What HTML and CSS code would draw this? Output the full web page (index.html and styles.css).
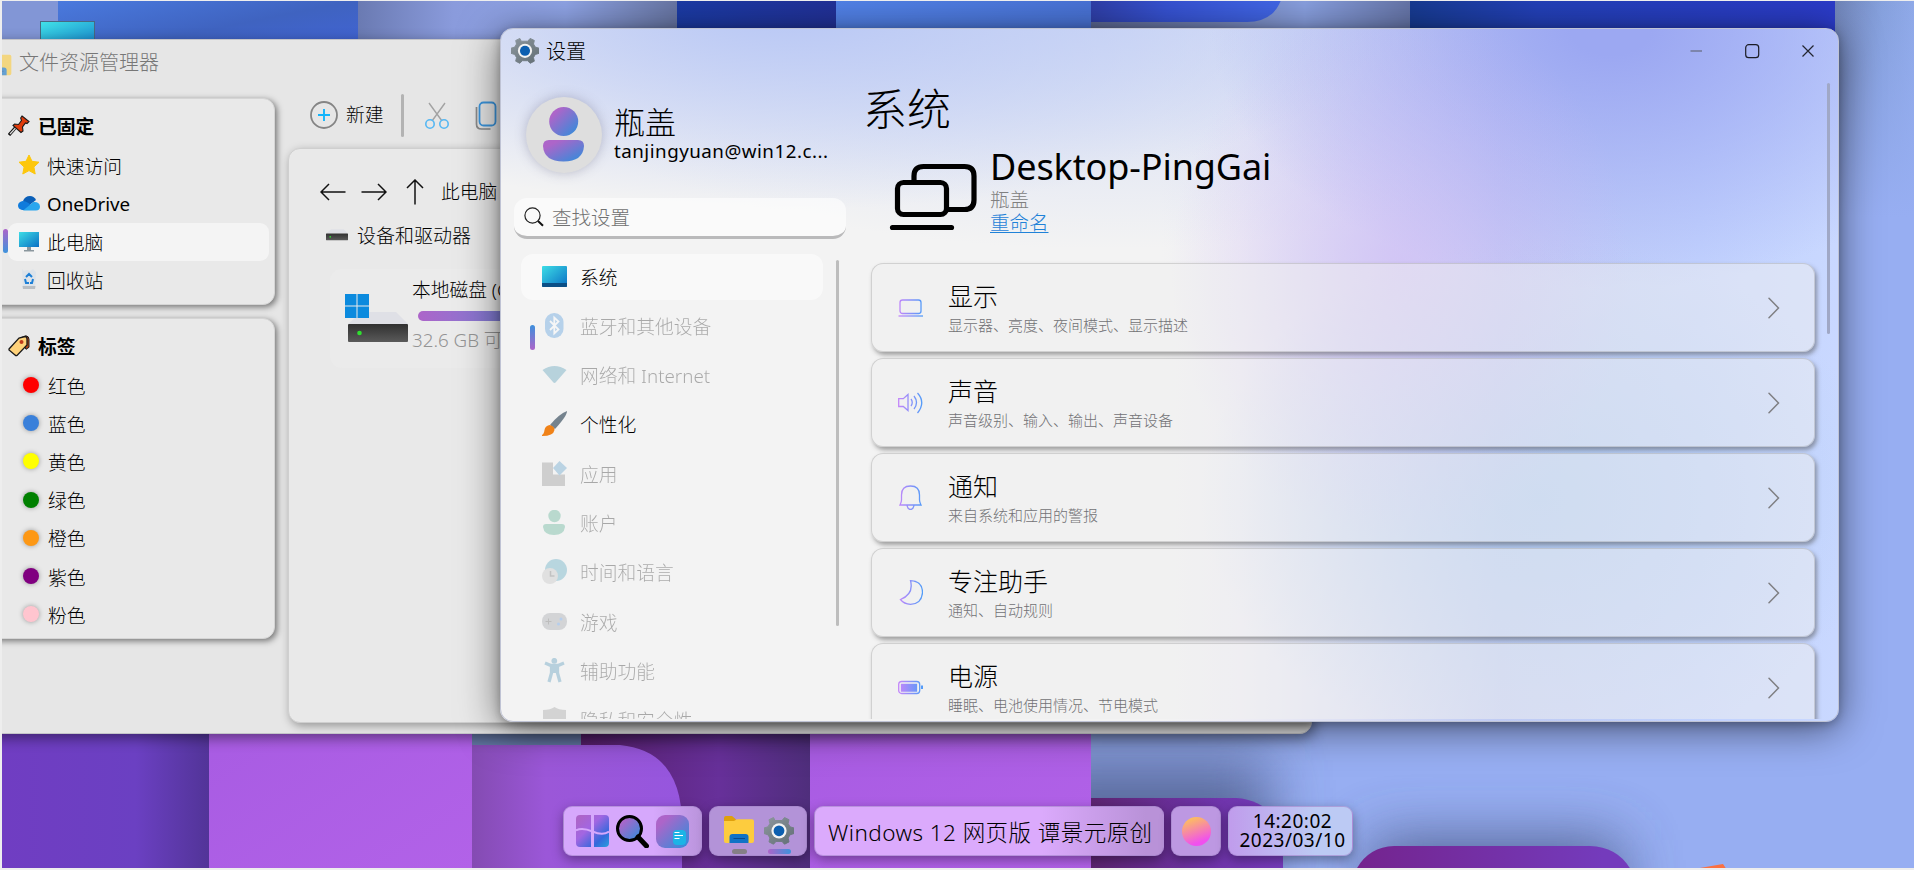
FILE: index.html
```
<!DOCTYPE html>
<html lang="zh-CN">
<head>
<meta charset="utf-8">
<title>Windows 12 网页版</title>
<link rel="stylesheet" href="styles.css">
</head>
<body>
<svg width="0" height="0" class="defs" aria-hidden="true">
  <defs>
    <linearGradient id="accent" x1="0" y1="0" x2="1" y2="1"><stop offset=".2" stop-color="#ad65c9"/><stop offset="1" stop-color="#2a8fdc"/></linearGradient>
    <linearGradient id="line" gradientUnits="userSpaceOnUse" x1="0" y1="0" x2="25" y2="0"><stop offset="0" stop-color="#c686fa"/><stop offset="1" stop-color="#4f9cf8"/></linearGradient>
    <linearGradient id="screen" x1="0" y1="0" x2="1" y2="1"><stop offset="0" stop-color="#3ddde6"/><stop offset="1" stop-color="#0a6fc4"/></linearGradient>
    <linearGradient id="gearg" x1="0" y1="0" x2="1" y2="1"><stop offset="0" stop-color="#8d979e"/><stop offset="1" stop-color="#626e75"/></linearGradient>
    <linearGradient id="diskg" x1="0" y1="0" x2="0" y2="1"><stop offset="0" stop-color="#303030"/><stop offset="1" stop-color="#5a5a5a"/></linearGradient>
    <linearGradient id="tile" x1="0" y1="0" x2="1" y2="1"><stop offset=".1" stop-color="#ad65c9"/><stop offset=".4" stop-color="#a266e2"/><stop offset=".75" stop-color="#3568dc"/><stop offset="1" stop-color="#2a9fdc"/></linearGradient>
    <symbol id="gear" viewBox="0 0 30 30">
      <path d="M11 4.500 9.500 1.500 5 3.700 5.900 7.500 4 10.800 0 12v5.500l4 1.300 1.900 3.200L5 25.900l4.500 2.300L12 25.400h6l2.500 2.800 4.500-2.300-.9-3.900 1.900-3.200 4-1.300V12l-4-1.200-1.900-3.300.9-3.800-4.500-2.200L18 4.500Z" fill="url(#gearg)" stroke="url(#gearg)" stroke-linejoin="round"/>
      <circle cx="15" cy="14.800" r="7.600" fill="#f3f3f3"/><circle cx="15" cy="14.800" r="5.400" fill="#0c5fb0"/>
    </symbol>
    <symbol id="folder" viewBox="0 0 30 28">
      <path d="M0 2q0-2 2-2h6l3 2.500q1.500 1 1.500 4V8H0Z" fill="#dfa00c"/>
      <path d="M0 5h10l3-1.700h15q2 0 2 2V25q0 2-2 2H2q-2 0-2-2Z" fill="#fdcc3e"/>
      <path d="M5.500 27v-6q0-3 3-3h13q3 0 3 3v6Z" fill="#1072c6"/><path d="M9.500 22.500h11.500" stroke="#0a4a8c" stroke-width="1"/>
    </symbol>
    <symbol id="disk" viewBox="0 0 60 32">
      <path d="M14 0h34l12 12H0Z" fill="#dfe0e6"/><rect y="12" width="60" height="18" rx="1" fill="url(#diskg)"/><circle cx="11.500" cy="21" r="2.300" fill="#2fe02f"/>
    </symbol>
    <symbol id="chev" viewBox="0 0 12 22"><path d="M1 1.200 10.500 11 1 20.800" fill="none" stroke="#7f7f83" stroke-width="1.500" stroke-linecap="round"/></symbol>
  </defs>
</svg>

<div class="desktop">
  <svg class="wallpaper" viewBox="0 0 1914 870" preserveAspectRatio="none" aria-hidden="true">
    <defs>
      <linearGradient id="w1" x1="0" y1="0" x2="1" y2="1"><stop offset="0" stop-color="#4a7ade"/><stop offset=".5" stop-color="#3f63c0"/><stop offset="1" stop-color="#4264da"/></linearGradient>
      <linearGradient id="w2"><stop offset="0" stop-color="#6a7ab2"/><stop offset=".3" stop-color="#8a9bdc"/><stop offset=".65" stop-color="#8fa4e6"/><stop offset="1" stop-color="#6876a4"/></linearGradient>
      <linearGradient id="w3"><stop offset="0" stop-color="#1b3ba6"/><stop offset="1" stop-color="#223198"/></linearGradient>
      <linearGradient id="w4" x1="0" y1="0" x2="1" y2=".1"><stop offset="0" stop-color="#5282e8"/><stop offset="1" stop-color="#4973d6"/></linearGradient>
      <linearGradient id="w5"><stop offset="0" stop-color="#2f3fa8"/><stop offset=".4" stop-color="#3652d2"/><stop offset="1" stop-color="#4166e6"/></linearGradient>
      <linearGradient id="w6"><stop offset="0" stop-color="#5d6993"/><stop offset=".4" stop-color="#7585b8"/><stop offset=".67" stop-color="#89a0e0"/><stop offset="1" stop-color="#6675a8"/></linearGradient>
      <linearGradient id="w7"><stop offset="0" stop-color="#173b92"/><stop offset=".3" stop-color="#2340b8"/><stop offset="1" stop-color="#2b3bc8"/></linearGradient>
      <linearGradient id="w8"><stop offset="0" stop-color="#6f83b6"/><stop offset=".6" stop-color="#85a0dc"/><stop offset="1" stop-color="#8fa9e8"/></linearGradient>
      <linearGradient id="w8y" x1="0" y1="0" x2="0" y2="1"><stop offset="0" stop-color="#97aef2" stop-opacity="0"/><stop offset=".25" stop-color="#97aef2"/></linearGradient>
      <linearGradient id="b1"><stop offset="0" stop-color="#703dc2"/><stop offset=".65" stop-color="#6b40c2"/><stop offset="1" stop-color="#523498"/></linearGradient>
      <linearGradient id="b2" x1="0" y1="0" x2="1" y2="1"><stop offset="0" stop-color="#a75be2"/><stop offset="1" stop-color="#b262e8"/></linearGradient>
      <linearGradient id="b3"><stop offset="0" stop-color="#844bb2"/><stop offset=".35" stop-color="#9b57d8"/><stop offset="1" stop-color="#9656de"/></linearGradient>
      <linearGradient id="b4"><stop offset="0" stop-color="#591f6e"/><stop offset=".6" stop-color="#67309a"/><stop offset="1" stop-color="#4f2e7c"/></linearGradient>
      <linearGradient id="b5"><stop offset="0" stop-color="#5c2470"/><stop offset=".6" stop-color="#6e33a8"/><stop offset="1" stop-color="#763cbc"/></linearGradient>
      <linearGradient id="b6"><stop offset="0" stop-color="#74248e"/><stop offset=".9" stop-color="#743bbc"/></linearGradient>
      <filter id="soft" x="-50%" y="-100%" width="200%" height="300%"><feGaussianBlur stdDeviation="30"/></filter>
    </defs>
    <rect width="1914" height="870" fill="#97aef2"/>
    <rect width="58" height="60" fill="#8296d6"/>
    <rect x="58" width="300" height="60" fill="url(#w1)"/>
    <rect x="358" width="319" height="60" fill="url(#w2)"/>
    <rect x="677" width="159" height="60" fill="url(#w3)"/>
    <rect x="836" width="255" height="60" fill="url(#w4)"/>
    <rect x="1091" width="319" height="60" fill="url(#w6)"/>
    <path d="M1091 0h190q-8 22-34 22H1091Z" fill="url(#w5)"/>
    <rect x="1410" width="425" height="60" fill="url(#w7)"/>
    <rect x="1835" width="79" height="870" fill="url(#w8)"/>
    <rect x="1835" width="79" height="870" fill="url(#w8y)"/>
    <rect x="1030" y="760" width="240" height="140" fill="#3f4d78" opacity=".7" filter="url(#soft)"/>
    <rect x="1370" y="840" width="250" height="90" fill="#3f4d78" opacity=".8" filter="url(#soft)"/>
    <rect y="700" width="209" height="170" fill="url(#b1)"/>
    <rect x="472" y="700" width="109" height="60" fill="#6377a4"/>
    <rect x="581" y="700" width="229" height="170" fill="url(#b4)"/>
    <path d="M472 745h148q62 6 62 80v45H472Z" fill="url(#b3)"/>
    <rect x="209" y="700" width="263" height="170" fill="url(#b2)"/>
    <rect x="810" y="700" width="281" height="170" fill="url(#b2)"/>
    <path d="M1091 798h145q47 3 47 60v12H1091Z" fill="url(#b5)"/>
    <path d="M1356 870q12-23 38-24h196q28 1 41 24Z" fill="url(#b6)"/>
    <path d="m1694 869 29-5 4 6Z" fill="#fb7040"/>
  </svg>
  <div class="shortcut"></div>

  <section class="window explorer">
    <header class="ex-title"><svg width="27" height="24"><use href="#folder"/></svg><span>文件资源管理器</span></header>
    <div class="ex-body">
      <aside class="ex-side">
        <div class="panel pinned">
          <h3><svg width="22" height="21" viewBox="0 0 22 21"><path d="m1 20 7-8" stroke="#111" stroke-width="3.200"/><path d="m2 19 6-6.500" stroke="#ddd" stroke-width="1.200"/><path d="m14 1 7 5.500-2 2-1.500-.5-3 4 .5 4-2 1.500-8-7L6.500 9l4 .5 3-4-.8-2.500Z" fill="#e03c0c" stroke="#1a1a1a" stroke-width="1.100"/></svg>已固定</h3>
          <ul>
            <li><svg viewBox="0 0 22 22"><path d="m11 1 3 6.300 7 .9-5.100 4.800 1.300 7-6.200-3.400L4.800 20l1.300-7L1 8.200l7-.9Z" fill="#fdc70c" stroke="#fdc70c" stroke-linejoin="round"/></svg>快速访问</li>
            <li class="latin"><svg viewBox="0 0 22 22"><path d="M5 9q2-5 7-5 4 0 6 4l-9 7Z" fill="#0a5fb8"/><path d="M4 18q-4-1-4-4.500T4.500 9q3 0 6 2l5 4-8 3Z" fill="#0f7bdc"/><path d="M5 18.500 15.500 10q6-.5 6.500 4.500 0 4-4 4Z" fill="#29a6ee"/></svg>OneDrive</li>
            <li class="active"><svg viewBox="0 0 22 22"><path d="M9 17h4v3h3v1.500H6V20h3Z" fill="#8b979e"/><rect x="1" y="2" width="20" height="15" fill="url(#screen)"/></svg>此电脑</li>
            <li><svg viewBox="0 0 22 22"><path d="m4 1 2 2 3-1 3 1 3-2 3 3-1 17H5Z" fill="#dde3e9"/><path d="m4.500 18 .5 3h12l.5-3Z" fill="#b9bec3"/><path d="m8 9 3-3 3 3M7 11l1 4h3M15 11l-1 4h-2" fill="none" stroke="#1d7fd6" stroke-width="2"/></svg>回收站</li>
          </ul>
        </div>
        <div class="panel tags">
          <h3><svg width="22" height="22" viewBox="0 0 22 22"><path d="M12 3 18 .8q3 .5 3 3.500v8l-3 2Z" fill="#b8441a" stroke="#1a1a1a"/><path d="M1 14 11 3l6-1.500q2 0 2 2.500v6L9 20.500Q8 21 7 20l-6-5Z" fill="#ffd27a" stroke="#1a1a1a" stroke-width="1.300"/><circle cx="13.500" cy="7" r="2" fill="#c0391b"/></svg>标签</h3>
          <ul>
            <li><i class="dot red"></i>红色</li>
            <li><i class="dot blue"></i>蓝色</li>
            <li><i class="dot yellow"></i>黄色</li>
            <li><i class="dot green"></i>绿色</li>
            <li><i class="dot orange"></i>橙色</li>
            <li><i class="dot purple"></i>紫色</li>
            <li><i class="dot pink"></i>粉色</li>
          </ul>
        </div>
      </aside>
      <main class="ex-main">
        <div class="tools">
          <svg width="28" height="28" viewBox="0 0 28 28" fill="none"><circle cx="14" cy="14" r="13" stroke="#858585" stroke-width="1.800"/><path d="M14 8v12M8 14h12" stroke="#12b4fb" stroke-width="1.900"/></svg>
          <span>新建</span><b class="rule"></b>
          <svg width="24" height="28" viewBox="0 0 24 28" fill="none"><path d="M4 2 17 20M20 2 7 20" stroke="#a3a3a3" stroke-width="1.400"/><circle cx="5" cy="23" r="4.200" stroke="#55b7f3" stroke-width="1.600"/><circle cx="19" cy="23" r="4.200" stroke="#55b7f3" stroke-width="1.600"/></svg>
          <svg class="copy" width="22" height="29" viewBox="0 0 22 29" fill="none"><path d="M1.500 6v17q0 5 5 5h9" stroke="#8a8a8a" stroke-width="1.700"/><rect x="4.500" y="1.500" width="16" height="23" rx="4" stroke="#3d96dd" stroke-width="1.800"/></svg>
        </div>
        <div class="pane">
          <div class="path">
            <svg width="26" height="26" viewBox="0 0 26 26"><path d="M25.500 13H1M9 5 1 13l8 8"/></svg>
            <svg width="26" height="26" viewBox="0 0 26 26"><path d="M.5 13H25M17 5l8 8-8 8"/></svg>
            <svg width="18" height="26" viewBox="0 0 18 26"><path d="M9 25.500V1M1 9l8-8 8 8"/></svg>
            <span>此电脑</span>
          </div>
          <div class="group"><svg width="22" height="12"><use href="#disk"/></svg>设备和驱动器</div>
          <div class="drive">
            <svg width="64" height="50" viewBox="0 0 64 50"><use href="#disk" x="3" y="18" width="60" height="32"/><path d="M0 0h11.500v11.500H0ZM12.500 0H24v11.500H12.500ZM0 12.500h11.500V24H0ZM12.500 12.500H24V24H12.500Z" fill="#0b8ade"/></svg>
            <div class="drive-info"><span>本地磁盘 (C:)</span><div class="bar"></div><small>32.6 GB 可用, 共 143 GB</small></div>
          </div>
        </div>
      </main>
    </div>
  </section>

  <section class="window settings">
    <header class="st-title">
      <svg width="28" height="28"><use href="#gear"/></svg><span>设置</span>
      <svg class="winbtns" width="122" height="16" viewBox="0 0 122 16" fill="none"><path d="M.5 8h11.500" stroke="#7d85ad" stroke-width="1.800"/><rect x="55.700" y="1.700" width="13" height="13" rx="3" stroke="#1b1c24" stroke-width="1.200"/><path d="m112.500 2.500 11 11m0-11-11 11" stroke="#23252f" stroke-width="1.200"/></svg>
    </header>
    <div class="st-body">
      <aside class="st-side">
        <div class="user">
          <div class="avatar"><svg width="42" height="56" viewBox="0 0 42 56"><circle cx="20.700" cy="14.500" r="14.500" fill="url(#accent)"/><path d="M0 39q0-6 6-6h29q6 0 6 6-1 15.500-20.500 15.500T0 39Z" fill="url(#accent)"/></svg></div>
          <div><div class="uname">瓶盖</div><div class="mail">tanjingyuan@win12.c...</div></div>
        </div>
        <div class="search"><svg width="20" height="20" viewBox="0 0 20 20" fill="none"><circle cx="8.500" cy="8.500" r="7.600" stroke="#222" stroke-width="1.200"/><path d="m14 14 5 4.800" stroke="#111" stroke-width="2"/></svg>查找设置</div>
        <nav>
          <b class="marker"></b><b class="thumb"></b>
          <a class="on"><svg viewBox="0 0 25 25"><rect y="2" width="25" height="21" rx="1" fill="url(#screen)"/><path d="M0 19h25v3q0 1-1 1H1q-1 0-1-1Z" fill="#0b4f86"/></svg>系统</a>
          <a class="off"><svg viewBox="0 0 25 25"><rect x="3" width="18.500" height="25" rx="9" fill="#2d84d6"/><path d="m8 8 8.500 8.500-4.200 4V4.500l4.200 4L8 17" fill="none" stroke="#fff" stroke-width="1.800"/></svg>蓝牙和其他设备</a>
          <a class="off"><svg viewBox="0 0 25 25"><path d="M.5 8q12-8 24 0L14 20q-1.500 2-3 0Z" fill="#3187a8"/></svg>网络和 Internet</a>
          <a><svg viewBox="0 0 25 25"><path d="M8 14Q17 3 25 0q0 5-12 18Z" fill="#75838e"/><path d="M0 24q2-1 2.500-5t5-5q5 1 5 5-1 6-12.500 6Z" fill="#f08218"/></svg>个性化</a>
          <a class="off"><svg viewBox="0 0 25 25"><path d="M0 1.500h11v12h12V25H0Z" fill="#7b7b7b"/><path d="m17.500 0 7.500 7-7.500 7.500L11 7Z" fill="#388ac0"/></svg>应用</a>
          <a class="off"><svg viewBox="0 0 25 25"><circle cx="12.500" cy="6" r="6.200" fill="#35a07c"/><path d="M1 17q0-3 3-3h16q3 0 3 3-1 8-11 8T1 17Z" fill="#35a07c"/></svg>账户</a>
          <a class="off"><svg viewBox="0 0 25 25"><circle cx="14" cy="11" r="11" fill="#3494b4"/><circle cx="8" cy="17" r="8" fill="#b5b5b5"/><path d="M8.500 12v5h4" stroke="#555" fill="none" stroke-width="1.500"/></svg>时间和语言</a>
          <a class="off"><svg viewBox="0 0 25 25"><rect y="4" width="25" height="17" rx="8" fill="#8b8f96"/><path d="M3.500 12.500h6M6.500 9.500v6" stroke="#444"/><circle cx="19" cy="10" r="1.500" fill="#2d7be0"/><circle cx="16.500" cy="15" r="1.500" fill="#2d7be0"/></svg>游戏</a>
          <a class="off"><svg viewBox="0 0 25 25"><circle cx="12.300" cy="2.800" r="2.900" fill="#3183ae"/><path d="m3 5 6 2.500h7l6-2.500M12.500 8v7M9.500 8v7L7 24M15.500 8v7l2.500 9" fill="none" stroke="#3183ae" stroke-width="3.300"/></svg>辅助功能</a>
          <a class="off"><svg viewBox="0 0 25 25"><path d="M12.500 0q4 3 11.500 3v11q-2 8-11.500 11Q3 22 1 14V3q7.500 0 11.500-3Z" fill="#8a8a8a"/></svg>隐私和安全性</a>
        </nav>
      </aside>
      <main class="st-main">
        <h1>系统</h1>
        <div class="device">
          <svg width="90" height="68" viewBox="0 0 90 68" fill="none" stroke="#000" stroke-width="5.200" stroke-linecap="round"><path d="M25 17V13q0-9.500 9.500-9.500h41Q85 3.500 85 13v24q0 9.500-9.500 9.500H60"/><rect x="8.500" y="19.500" width="49" height="32" rx="6"/><path d="M3.500 64.500h59"/></svg>
          <div class="dev-info"><div class="host">Desktop-PingGai</div><div class="owner">瓶盖</div><a class="rename">重命名</a></div>
        </div>
        <div class="cards">
          <div class="card"><svg class="ico" viewBox="0 0 25 25"><rect x="2" y="5" width="21" height="13.500" rx="2.500"/><path d="M.5 21h24.500"/></svg><div class="ct"><h2>显示</h2><p>显示器、亮度、夜间模式、显示描述</p></div><svg class="chev"><use href="#chev"/></svg></div>
          <div class="card"><svg class="ico" viewBox="0 0 25 25"><path d="M.7 8.700h4.600L10 4.500v16L5.300 16.500H.7ZM13 9q2.500 3.500 0 7M16 6q5 6.500 0 13M19.500 3q8.500 9.500 0 20"/></svg><div class="ct"><h2>声音</h2><p>声音级别、输入、输出、声音设备</p></div><svg class="chev"><use href="#chev"/></svg></div>
          <div class="card"><svg class="ico" viewBox="0 0 25 25"><path d="M2 20q1.500-3 1.500-5V10q0-9 9-9t9 9v5q0 2 1.500 5ZM9 20.500q1 4 3.500 4t3.500-4"/></svg><div class="ct"><h2>通知</h2><p>来自系统和应用的警报</p></div><svg class="chev"><use href="#chev"/></svg></div>
          <div class="card"><svg class="ico" viewBox="0 0 25 25"><path d="M12.500.7q12 .5 12 12-1 11.300-12 11.600Q6 24 2.500 19.500 16 14 12.500.7Z"/></svg><div class="ct"><h2>专注助手</h2><p>通知、自动规则</p></div><svg class="chev"><use href="#chev"/></svg></div>
          <div class="card"><svg class="ico" viewBox="0 0 25 25"><rect x=".7" y="6.500" width="21" height="12" rx="3"/><path d="M3.500 9.500h15v6.500h-15Z" fill="url(#line)"/><path d="M24 10.500v3.500" stroke-width="2"/></svg><div class="ct"><h2>电源</h2><p>睡眠、电池使用情况、节电模式</p></div><svg class="chev"><use href="#chev"/></svg></div>
        </div>
      </main>
      <b class="vthumb"></b>
    </div>
  </section>

  <footer class="taskbar">
    <div class="dock start">
      <svg width="33" height="33" viewBox="0 0 33 33"><rect width="33" height="32" rx="4" fill="url(#tile)"/><path d="M15 0h3v33h-3Z" fill="#d6a8fc"/><path d="M0 15.500q6-3.500 16.500 1T33 16.500" fill="none" stroke="#d6a8fc" stroke-width="2"/></svg>
      <svg width="33" height="33" viewBox="0 0 33 33"><circle cx="13.500" cy="13.500" r="12" fill="url(#accent)" stroke="#000" stroke-width="3"/><path d="m22 22 8.500 9" stroke="#000" stroke-width="5" stroke-linecap="round"/></svg>
      <svg width="33" height="33" viewBox="0 0 33 33"><rect width="33" height="33" rx="9" fill="url(#accent)"/><rect x="17" y="15" width="13" height="15" rx="4" fill="#1cb4e6"/><path d="M18.500 17.500h5M18.500 20.500h8.500M18.500 23.500h5" stroke="#fff" stroke-width="1.200"/></svg>
    </div>
    <div class="dock apps">
      <div class="app"><svg width="30" height="28"><use href="#folder"/></svg><i></i></div>
      <div class="app current"><svg width="30" height="30"><use href="#gear"/></svg><i></i></div>
    </div>
    <div class="dock label"><span>Windows 12 网页版 谭景元原创</span></div>
    <div class="dock orbbox"><b class="orb"></b></div>
    <div class="dock clock"><span>14:20:02</span><span>2023/03/10</span></div>
  </footer>
</div>
</body>
</html>
```
FILE: styles.css
```
* { box-sizing: border-box; }
body { margin: 0; overflow: hidden; background: #eeeeee; color: #000;
  font-family: "Noto Sans", "Noto Sans CJK SC", sans-serif; font-weight: 300; font-size: 18.75px; white-space: nowrap; }
h1, h2, h3, p, ul { margin: 0; padding: 0; list-style: none; font-weight: 300; }
svg { flex: none; display: block; }
.defs { position: absolute; }
.desktop { position: relative; margin: 1px 0 0 2px; width: 1912px; height: 867px; overflow: hidden; }
.wallpaper { position: absolute; left: -2px; top: -1px; width: 1914px; height: 870px; }
.shortcut { position: absolute; left: 38px; top: 20px; width: 55px; height: 40px; border: 1.5px solid #496981; background: linear-gradient(160deg, #40e2e8, #0e70c6 90%); }

.window { position: absolute; border: 1px solid #c4c4c8; overflow: hidden; }

/* file explorer */
.explorer { left: -21px; top: 38px; width: 1331px; height: 695px; border-radius: 12px; background: #e6e6e6; box-shadow: 2px 4px 14px rgba(0,0,0,.45); }
.ex-title { display: flex; align-items: center; gap: 7px; height: 46px; padding: 0 0 3px 3px; font-size: 20px; color: #777; }
.ex-title svg { opacity: .6; position: relative; top: 2px; }
.ex-body { display: flex; height: 647px; }
.ex-side { width: 293px; padding-top: 12px; }
.panel { margin-bottom: 13px; border: 1px solid #d5d5d5; border-radius: 12px; background: #e9e9e9; box-shadow: 2px 2px 6px rgba(0,0,0,.5); padding-left: 25px; }
.pinned { height: 207px; }
.tags { height: 321px; }
.panel h3 { display: flex; align-items: center; gap: 8px; height: 48px; padding-top: 5px; font-size: 18.750px; font-weight: 700; }
.panel li { display: flex; align-items: center; height: 38px; padding-bottom: 2px; }
.pinned li { gap: 7px; padding-left: 10px; margin: 0 5px 0 0; }
.pinned li svg { width: 22px; height: 22px; }
.pinned .latin { font-weight: 400; }
.pinned .active { position: relative; background: #f4f4f4; border-radius: 9px; }
.active::before { content: ""; position: absolute; left: -5px; top: 6px; width: 5px; height: 24px; border-radius: 3px; background: linear-gradient(#ad65c9, #3d93dc); }
.tags li { gap: 9px; padding-left: 15px; height: 38.200px; }
.dot { width: 16px; height: 16px; border-radius: 50%; box-shadow: 0 0 5px rgba(0,0,0,.35); }
.red { background: #f00; } .blue { background: #3a80da; } .yellow { background: #ff0; } .green { background: #008000; }
.orange { background: #fd9815; } .purple { background: #800080; } .pink { background: #ffc5cf; }
.ex-main { flex: 1; padding-left: 13px; }
.tools { display: flex; align-items: center; height: 62px; padding: 0 0 4px 22px; }
.tools span { margin: 0 17px 3px 8px; }
.rule { width: 3px; height: 43px; border-radius: 2px; background: #b3b3b3; margin-right: 21px; }
.copy { margin-left: 26px; }
.pane { height: 575px; border: 1px solid #cfcfcf; border-radius: 12px 0 0 12px; background: #e9e9e9; box-shadow: 2px 3px 10px rgba(0,0,0,.35); padding-left: 31px; }
.path { display: flex; align-items: center; height: 86px; }
.path svg { fill: none; stroke: #111; stroke-width: 1.500; margin-right: 15px; }
.path svg + svg + svg { margin: 0 17px 0 4px; }
.path span { margin-bottom: 3px; }
.group { display: flex; align-items: center; gap: 9px; margin: -12px 0 0 6px; height: 24px; font-size: 19px; }
.drive { display: flex; margin: 22px 0 0 10px; width: 320px; height: 99px; padding: 25px 0 0 15px; border-radius: 12px; background: #ebebeb; }
.drive-info { margin: -20px 0 0 3px; display: flex; flex-direction: column; }
.drive-info span { line-height: 31px; }
.bar { width: 190px; height: 10px; margin: 6px 0 5px 6px; border-radius: 5px; background: linear-gradient(90deg, #ad65c9, #6d86d8 60%, #3d93dc); }
.drive-info small { font-size: 18.75px; line-height: 28px; color: #949494; }

/* settings */
.settings { left: 498px; top: 27px; width: 1339px; height: 694px; border-radius: 13px; border-color: #bfc3d4;
  box-shadow: 0 6px 40px rgba(0,0,0,.55), 0 2px 10px rgba(0,0,0,.25);
  background:
    radial-gradient(ellipse 230px 270px at 900px 240px, rgba(208,184,246,.6), rgba(208,184,246,0)),
    radial-gradient(ellipse 400px 260px at 1110px 0, #9ca8f2 10%, rgba(156,168,242,0)),
    radial-gradient(ellipse 340px 260px at 1040px 470px, rgba(168,200,240,.75), rgba(168,200,240,0)),
    radial-gradient(ellipse 600px 200px at 290px -20px, #bccaf5 10%, rgba(200,212,246,0)),
    radial-gradient(ellipse 620px 240px at 600px -20px, rgba(200,212,246,.8), rgba(214,220,240,0)),
    linear-gradient(90deg, #f3f3f3 660px, #eeedf4 740px, #c3ccf4 1000px, #c2d2fe 1200px, #c9d8ff); }
.st-title { display: flex; align-items: center; height: 45px; padding: 0 26px 2px 10px; font-size: 20px; }
.st-title span { margin-left: 7px; }
.winbtns { margin-left: auto; overflow: visible; }
.st-body { position: relative; display: flex; height: 645px; overflow: hidden; }
.st-side { width: 364px; padding-left: 13px; }
.user { display: flex; align-items: center; gap: 12px; height: 122px; padding: 0 0 0 12px; }
.avatar { display: flex; align-items: center; justify-content: center; width: 76px; height: 76px; border-radius: 50%; background: #dedede; box-shadow: 0 0 12px rgba(90,90,120,.35); }
.uname { font-size: 31px; line-height: 34px; margin-top: -3px; }
.mail { font-size: 18.750px; line-height: 24px; font-weight: 400; letter-spacing: .5px; }
.search { display: flex; align-items: center; gap: 8px; width: 332px; height: 41px; margin-top: 2px; padding: 0 0 1px 10px; border-radius: 13px; border-bottom: 3px solid #bababb; background: rgba(255,255,255,.6); font-size: 19.500px; color: #717171; }
nav { position: relative; display: flex; flex-direction: column; gap: 3.330px; padding: 15px 0 0 7px; }
nav a { display: flex; align-items: center; gap: 13px; width: 302px; height: 46px; flex: none; padding: 0 0 2px 21px; border-radius: 12px; }
nav a svg { width: 25px; height: 25px; }
nav .on { background: rgba(255,255,255,.5); }
nav .off { opacity: .3; }
.marker { position: absolute; left: 16px; top: 86px; width: 5px; height: 25px; border-radius: 3px; background: linear-gradient(#3d8fdc, #ad65c9); }
.thumb { position: absolute; left: 322px; top: 21px; width: 3px; height: 366px; border-radius: 2px; background: #bdbdbd; }
.st-main { width: 960px; }
.st-main h1 { font-size: 44px; line-height: 60px; height: 66px; padding: 5px 0 0; margin-left: -2px; }
.device { display: flex; align-items: flex-start; gap: 11px; height: 123px; padding: 23px 0 0 24px; }
.dev-info { margin-top: -20px; }
.host { font-size: 36px; line-height: 47px; font-weight: 400; letter-spacing: -.1px; }
.owner { font-size: 19.500px; line-height: 23px; color: #808080; margin-top: -2px; }
.rename { display: block; font-size: 19.500px; line-height: 23px; color: #1f82d8; text-decoration: underline; text-underline-offset: 2px; text-decoration-thickness: 1px; }
.cards { display: flex; flex-direction: column; gap: 6px; padding: 0 0 0 6px; }
.card { display: flex; align-items: center; width: 944px; height: 89px; flex: none; border: 1px solid rgba(150,150,150,.35); border-radius: 12px; background: rgba(240,240,240,.5); box-shadow: 2px 3px 4px rgba(80,80,80,.5); padding: 0 34px 0 26px; }
.ico { width: 25px; height: 25px; fill: none; stroke: url(#line); stroke-width: 1.300; }
.ct { margin: 3px 0 0 25px; flex: 1; }
.ct h2 { font-size: 25px; line-height: 32px; }
.ct p { font-size: 15px; line-height: 26px; color: #717175; }
.chev { width: 12px; height: 22px; }
.vthumb { position: absolute; left: 1326px; top: 9px; width: 3px; height: 251px; border-radius: 2px; background: #a0a8c6; }

/* taskbar */
.taskbar { position: absolute; left: 561px; top: 805px; display: flex; gap: 7px; }
.dock { display: flex; align-items: center; height: 50px; border: 1px solid rgba(160,130,200,.6); border-radius: 9px; background: #d6a8fc; box-shadow: 0 4px 12px rgba(0,0,0,.35); }
.start { width: 139px; gap: 7px; padding-left: 12px; background: linear-gradient(90deg, #d6a8fc 65%, #ba94dc); }
.apps { width: 98px; gap: 10px; padding-left: 14px; background: #b393d8; }
.app { display: flex; flex-direction: column; align-items: center; justify-content: space-between; height: 38px; margin-top: 8px; }
.app i { width: 15px; height: 5px; border-radius: 3px; background: #857f86; }
.current i { width: 23px; background: linear-gradient(90deg, #ad65c9, #3d93dc); }
.label { width: 350px; padding-left: 13px; font-size: 22.500px; letter-spacing: .45px; background: linear-gradient(90deg, #dbaafc 65%, #b992d8 95%); }
.orbbox { width: 50px; justify-content: center; background: #bd98e2; }
.orb { width: 29px; height: 29px; border-radius: 50%; background: linear-gradient(160deg, #fdc05c 10%, #f050ee 80%); }
.clock { width: 125px; flex-direction: column; justify-content: center; padding-left: 4px; font-size: 19px; font-weight: 400; letter-spacing: .5px; line-height: 19px; background: linear-gradient(90deg, #c09cec, #bccaf4 70%); }
```
